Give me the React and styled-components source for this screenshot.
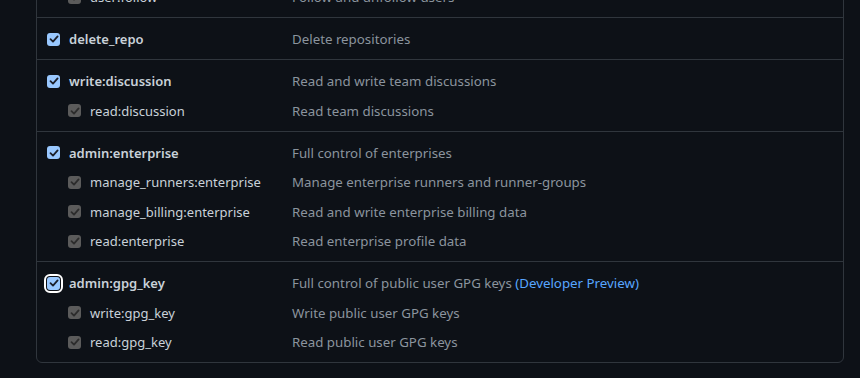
import styled, { createGlobalStyle, css } from "styled-components";

const Global = createGlobalStyle`
  html, body {
    margin: 0;
    background: #0d1117;
  }
  body {
    font-family: "Noto Sans", "Open Sans", sans-serif;
    font-size: 13.3px;
    color: #c9d1d9;
  }
`;

const Page = styled.div`
  padding: 1px 16px 20px 36px;
`;

const Box = styled.div`
  width: 808px;
  box-sizing: border-box;
  margin-top: -26px;
  border: 1px solid #30363d;
  border-radius: 6px;
`;

const Group = styled.div`
  padding: 6.5px 0 5px;
  & + & {
    border-top: 1px solid #30363d;
  }
`;

const Row = styled.div`
  display: flex;
  align-items: center;
  height: 29.5px;
  padding-left: 10px;
`;

const Label = styled.label`
  display: flex;
  align-items: center;
  width: 245px;
  flex-shrink: 0;
  padding-left: ${(p) => (p.$child ? "21px" : "0")};
  box-sizing: border-box;
  font-size: 13px;
  font-weight: ${(p) => (p.$child ? 400 : 600)};
  color: #c9d1d9;
  white-space: nowrap;
`;

const Check = styled.span`
  width: 13px;
  height: 13px;
  border-radius: 3px;
  margin-right: 9px;
  flex-shrink: 0;
  display: flex;
  align-items: center;
  justify-content: center;
  background: ${(p) => (p.$disabled ? "#5b5b5b" : "#99c8ff")};
  color: ${(p) => (p.$disabled ? "#2c2c2c" : "#1b1f2a")};
  ${(p) =>
    p.$focus &&
    css`
      outline: 2px solid #ffffff;
      outline-offset: 1.5px;
    `}
`;

const Desc = styled.span`
  color: #8b949e;
  white-space: nowrap;
`;

const Preview = styled.span`
  color: #58a6ff;
`;

const Tick = () => (
  <svg width="10" height="10" viewBox="0 0 10 10" fill="none">
    <path
      d="M1.5 5.2 L4 7.6 L8.6 2.4"
      stroke="currentColor"
      strokeWidth="1.8"
      strokeLinecap="round"
      strokeLinejoin="round"
    />
  </svg>
);

const groups = [
  {
    rows: [{ name: "user:follow", desc: "Follow and unfollow users", child: true }],
  },
  { rows: [{ name: "delete_repo", desc: "Delete repositories" }] },
  {
    rows: [
      { name: "write:discussion", desc: "Read and write team discussions" },
      { name: "read:discussion", desc: "Read team discussions", child: true },
    ],
  },
  {
    rows: [
      { name: "admin:enterprise", desc: "Full control of enterprises" },
      {
        name: "manage_runners:enterprise",
        desc: "Manage enterprise runners and runner-groups",
        child: true,
      },
      {
        name: "manage_billing:enterprise",
        desc: "Read and write enterprise billing data",
        child: true,
      },
      { name: "read:enterprise", desc: "Read enterprise profile data", child: true },
    ],
  },
  {
    rows: [
      {
        name: "admin:gpg_key",
        desc: "Full control of public user GPG keys",
        preview: true,
        focus: true,
      },
      { name: "write:gpg_key", desc: "Write public user GPG keys", child: true },
      { name: "read:gpg_key", desc: "Read public user GPG keys", child: true },
    ],
  },
];

export default function App() {
  return (
    <>
      <Global />
      <Page>
        <Box>
          {groups.map((g, i) => (
            <Group key={i}>
              {g.rows.map((r) => (
                <Row key={r.name}>
                  <Label $child={r.child}>
                    <Check $disabled={r.child} $focus={r.focus}>
                      <Tick />
                    </Check>
                    {r.name}
                  </Label>
                  <Desc>
                    {r.desc}
                    {r.preview && <Preview> (Developer Preview)</Preview>}
                  </Desc>
                </Row>
              ))}
            </Group>
          ))}
        </Box>
      </Page>
    </>
  );
}
